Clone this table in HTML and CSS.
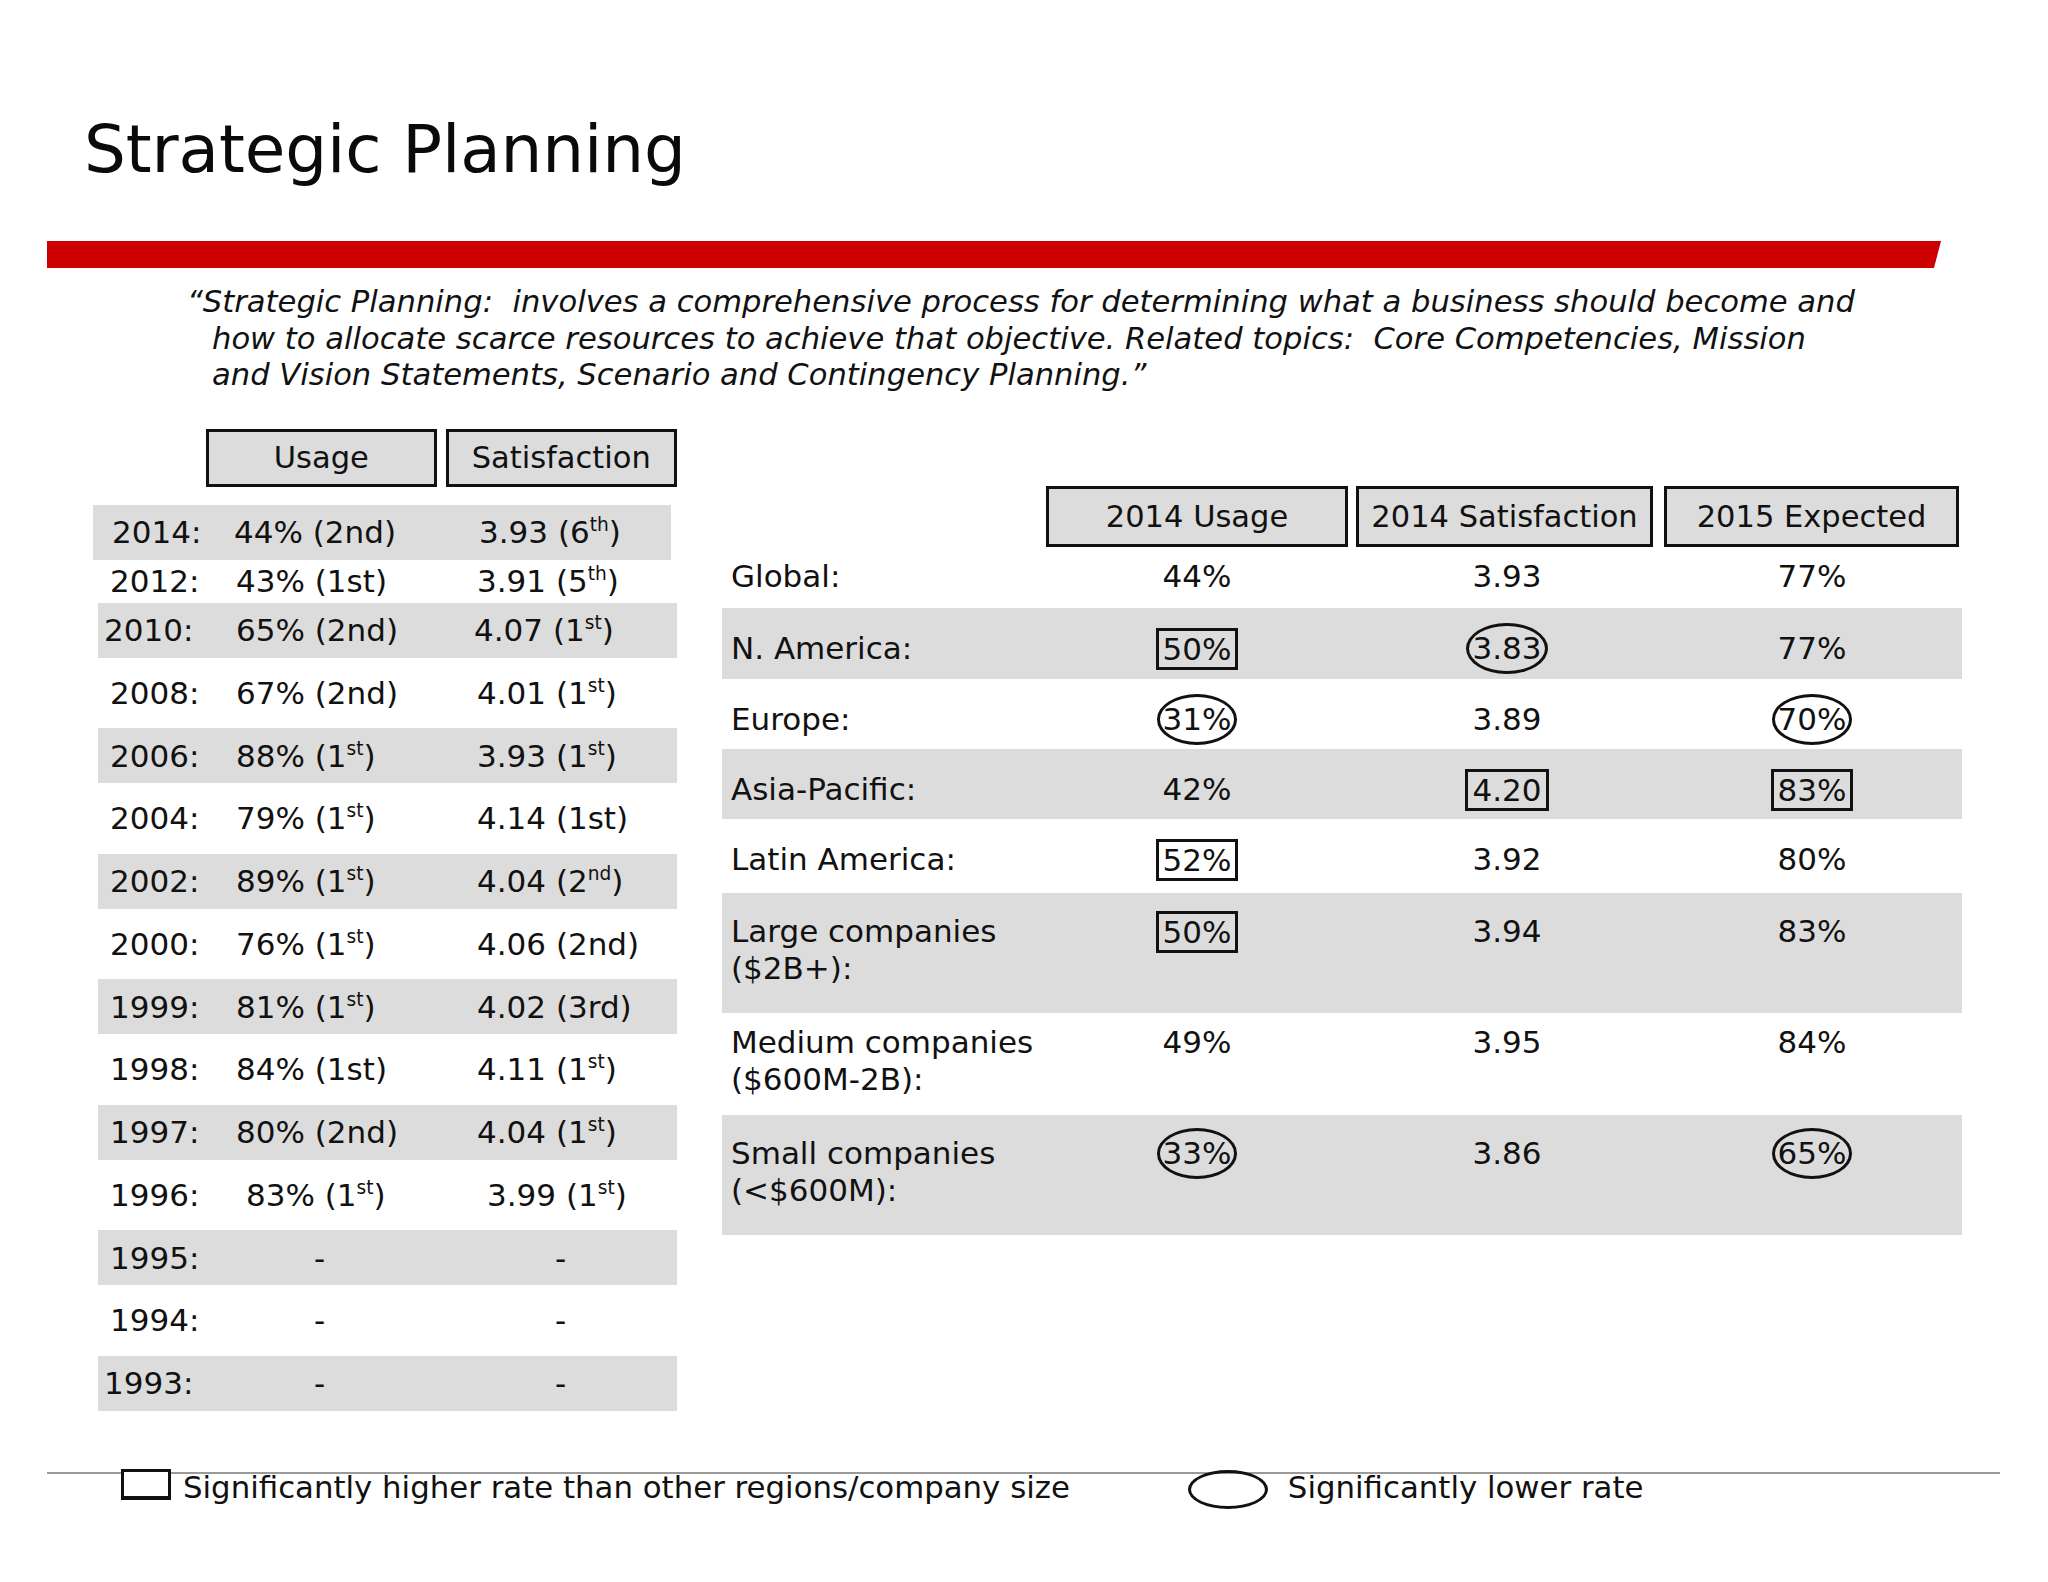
FILE: index.html
```html
<!DOCTYPE html>
<html lang="en">
<head>
<meta charset="utf-8">
<title>Strategic Planning</title>
<link rel="stylesheet" href="styles.css">
</head>
<body>
<div class="slide">
  <h1 class="title">Strategic Planning</h1>
  <div class="redbar"></div>
  <p class="quote">“Strategic Planning:&nbsp; involves a comprehensive process for determining what a business should become and<br>how to allocate scarce resources to achieve that objective. Related topics:&nbsp; Core Competencies, Mission<br>and Vision Statements, Scenario and Contingency Planning.”</p>

  <div class="main">
    <section class="hist">
      <div class="hist-head">
        <div class="hbox hbox-usage">Usage</div>
        <div class="hbox hbox-sat">Satisfaction</div>
      </div>
      <div class="hist-rows">
        <div class="hrow gray r2014"><span class="yr">2014:</span><span class="u-l">44% (2nd)</span><span>3.93 (6<sup>th</sup>)</span></div>
        <div class="hrow short"><span class="yr">2012:</span><span>43% (1st)</span><span>3.91 (5<sup>th</sup>)</span></div>
        <div class="hrow gray"><span class="yr yr-l">2010:</span><span>65% (2nd)</span><span class="sat-l">4.07 (1<sup>st</sup>)</span></div>
        <div class="hrow"><span class="yr">2008:</span><span>67% (2nd)</span><span>4.01 (1<sup>st</sup>)</span></div>
        <div class="hrow gray"><span class="yr">2006:</span><span>88% (1<sup>st</sup>)</span><span>3.93 (1<sup>st</sup>)</span></div>
        <div class="hrow"><span class="yr">2004:</span><span>79% (1<sup>st</sup>)</span><span>4.14 (1st)</span></div>
        <div class="hrow gray"><span class="yr">2002:</span><span>89% (1<sup>st</sup>)</span><span>4.04 (2<sup>nd</sup>)</span></div>
        <div class="hrow"><span class="yr">2000:</span><span>76% (1<sup>st</sup>)</span><span>4.06 (2nd)</span></div>
        <div class="hrow gray"><span class="yr">1999:</span><span>81% (1<sup>st</sup>)</span><span>4.02 (3rd)</span></div>
        <div class="hrow"><span class="yr">1998:</span><span>84% (1st)</span><span>4.11 (1<sup>st</sup>)</span></div>
        <div class="hrow gray"><span class="yr">1997:</span><span>80% (2nd)</span><span>4.04 (1<sup>st</sup>)</span></div>
        <div class="hrow"><span class="yr">1996:</span><span class="shift">83% (1<sup>st</sup>)</span><span class="shift">3.99 (1<sup>st</sup>)</span></div>
        <div class="hrow gray"><span class="yr">1995:</span><span class="dash">-</span><span class="dash">-</span></div>
        <div class="hrow"><span class="yr">1994:</span><span class="dash">-</span><span class="dash">-</span></div>
        <div class="hrow gray"><span class="yr yr-l">1993:</span><span class="dash">-</span><span class="dash">-</span></div>
      </div>
    </section>

    <section class="region">
      <div class="rhead">
        <span></span>
        <div class="hbox rbox rbox-1">2014 Usage</div>
        <div class="hbox rbox rbox-2">2014 Satisfaction</div>
        <div class="hbox rbox rbox-3">2015 Expected</div>
      </div>
      <div class="rrow tight h61"><span class="lbl">Global:</span><span class="val">44%</span><span class="val">3.93</span><span class="val">77%</span></div>
      <div class="rrow gray h71"><span class="lbl">N. America:</span><span class="val"><span class="box">50%</span></span><span class="val"><span class="ring">3.83</span></span><span class="val">77%</span></div>
      <div class="rrow h70"><span class="lbl">Europe:</span><span class="val"><span class="ring">31%</span></span><span class="val">3.89</span><span class="val"><span class="ring">70%</span></span></div>
      <div class="rrow gray h70"><span class="lbl">Asia-Pacific:</span><span class="val">42%</span><span class="val"><span class="box">4.20</span></span><span class="val"><span class="box">83%</span></span></div>
      <div class="rrow h74"><span class="lbl">Latin America:</span><span class="val"><span class="box">52%</span></span><span class="val">3.92</span><span class="val">80%</span></div>
      <div class="rrow gray h120 two"><span class="lbl">Large companies<br>($2B+):</span><span class="val"><span class="box">50%</span></span><span class="val">3.94</span><span class="val">83%</span></div>
      <div class="rrow tight h102"><span class="lbl">Medium companies<br>($600M-2B):</span><span class="val">49%</span><span class="val">3.95</span><span class="val">84%</span></div>
      <div class="rrow gray h120 two"><span class="lbl">Small companies<br>(&lt;$600M):</span><span class="val"><span class="ring">33%</span></span><span class="val">3.86</span><span class="val"><span class="ring">65%</span></span></div>
    </section>
  </div>

  <div class="legend">
    <div class="legend-items">
      <span class="lg-box"></span><span class="lg-text">Significantly higher rate than other regions/company size</span>
      <span class="lg-ring"></span><span class="lg-text lg-text-2">Significantly lower rate</span>
    </div>
  </div>
</div>
</body>
</html>
```

FILE: styles.css
```css
* { box-sizing: border-box; }

html, body {
  margin: 0;
  padding: 0;
  background: #ffffff;
}

body {
  font-family: "DejaVu Sans", Verdana, sans-serif;
  color: #111111;
}

.slide {
  width: 2048px;
  height: 1582px;
  padding-top: 117px;
  overflow: hidden;
}

.title {
  margin: 0;
  padding-left: 84px;
  font-size: 66px;
  line-height: 66px;
  font-weight: normal;
  color: #0a0a0a;
  letter-spacing: -0.1px;
}

.redbar {
  margin: 58px 0 0 47px;
  width: 1894px;
  height: 27px;
  background: #cc0000;
  clip-path: polygon(0 0, 100% 0, calc(100% - 7px) 100%, 0 100%);
}

.quote {
  margin: 16px 0 0 0;
  padding-left: 212px;
  text-indent: -25px;
  font-style: italic;
  font-size: 30.6px;
  line-height: 36.5px;
  color: #111111;
}

.main {
  display: flex;
  align-items: flex-start;
  margin-top: 35px;
}

/* ---------- history table ---------- */
.hist {
  margin-left: 98px;
  width: 579px;
  font-size: 31px;
}

.hist-head {
  display: flex;
  gap: 9px;
  padding-left: 108px;
  height: 58px;
}

.hbox {
  border: 3px solid #111111;
  background: #dcdcdc;
  display: flex;
  align-items: center;
  justify-content: center;
  font-size: 30.5px;
  white-space: nowrap;
}

.hbox-usage { width: 231px; }
.hbox-sat { width: 232px; }

.hist-rows {
  margin-top: 18px;
}

.hrow {
  display: grid;
  grid-template-columns: 126px 241px 1fr;
  align-items: center;
  height: 70.5px;
  padding-left: 12px;
  white-space: nowrap;
}

.hrow.gray {
  height: 55px;
  background: #dcdcdc;
}

.hrow.short { height: 43px; }

.hrow.r2014 {
  margin-left: -5px;
  margin-right: 6px;
  padding-left: 19px;
}

.yr-l { margin-left: -6px; }
.u-l { margin-left: -4px; }
.sat-l { margin-left: -3px; }
.shift { padding-left: 10px; }
.dash { padding-left: 78px; }

sup {
  font-size: 0.6em;
  line-height: 0;
  vertical-align: 0.62em;
}

/* ---------- region table ---------- */
.region {
  margin-left: 45px;
  margin-top: 57px;
  width: 1240px;
  font-size: 31px;
}

.rhead {
  display: grid;
  grid-template-columns: 320px 310px 310px 300px;
  height: 61px;
}

.rbox-1 { margin: 0 4px 0 4px; }
.rbox-2 { margin: 0 9px 0 4px; }
.rbox-3 { margin: 0 3px 0 2px; }

.rrow {
  display: grid;
  grid-template-columns: 320px 310px 310px 300px;
  align-items: start;
  padding-top: 22px;
  line-height: 37px;
  white-space: nowrap;
}

.rrow.gray { background: #dcdcdc; }
.rrow.tight { padding-top: 11px; }
.rrow.two { padding-top: 20px; }

.h61 { height: 61px; }
.h70 { height: 70px; }
.h71 { height: 71px; }
.h74 { height: 74px; }
.h102 { height: 102px; }
.h120 { height: 120px; }

.lbl { padding-left: 9px; }

.val {
  display: flex;
  justify-content: center;
}

.box {
  display: inline-block;
  border: 3px solid #111111;
  padding: 0 4px;
  line-height: 36px;
  margin-top: -2px;
}

.ring {
  display: inline-block;
  border: 3px solid #111111;
  border-radius: 50%;
  padding: 4px 3px;
  line-height: 37px;
  margin-top: -7px;
}

/* ---------- legend ---------- */
.legend {
  margin: 61px 0 0 47px;
  width: 1953px;
  border-top: 2px solid #9a9a9a;
}

.legend-items {
  display: flex;
  align-items: flex-start;
  margin-top: -5px;
  padding-left: 74px;
  font-size: 30.8px;
  line-height: 36px;
}

.lg-box {
  width: 50px;
  height: 31px;
  border: 3px solid #111111;
  border-bottom-width: 4px;
  background: #ffffff;
}

.lg-ring {
  width: 80px;
  height: 39px;
  border: 3px solid #111111;
  border-radius: 50%;
  margin-left: 118px;
  margin-top: 1px;
}

.lg-text {
  margin-left: 12px;
  white-space: nowrap;
}

.lg-text-2 { margin-left: 20px; }
```
